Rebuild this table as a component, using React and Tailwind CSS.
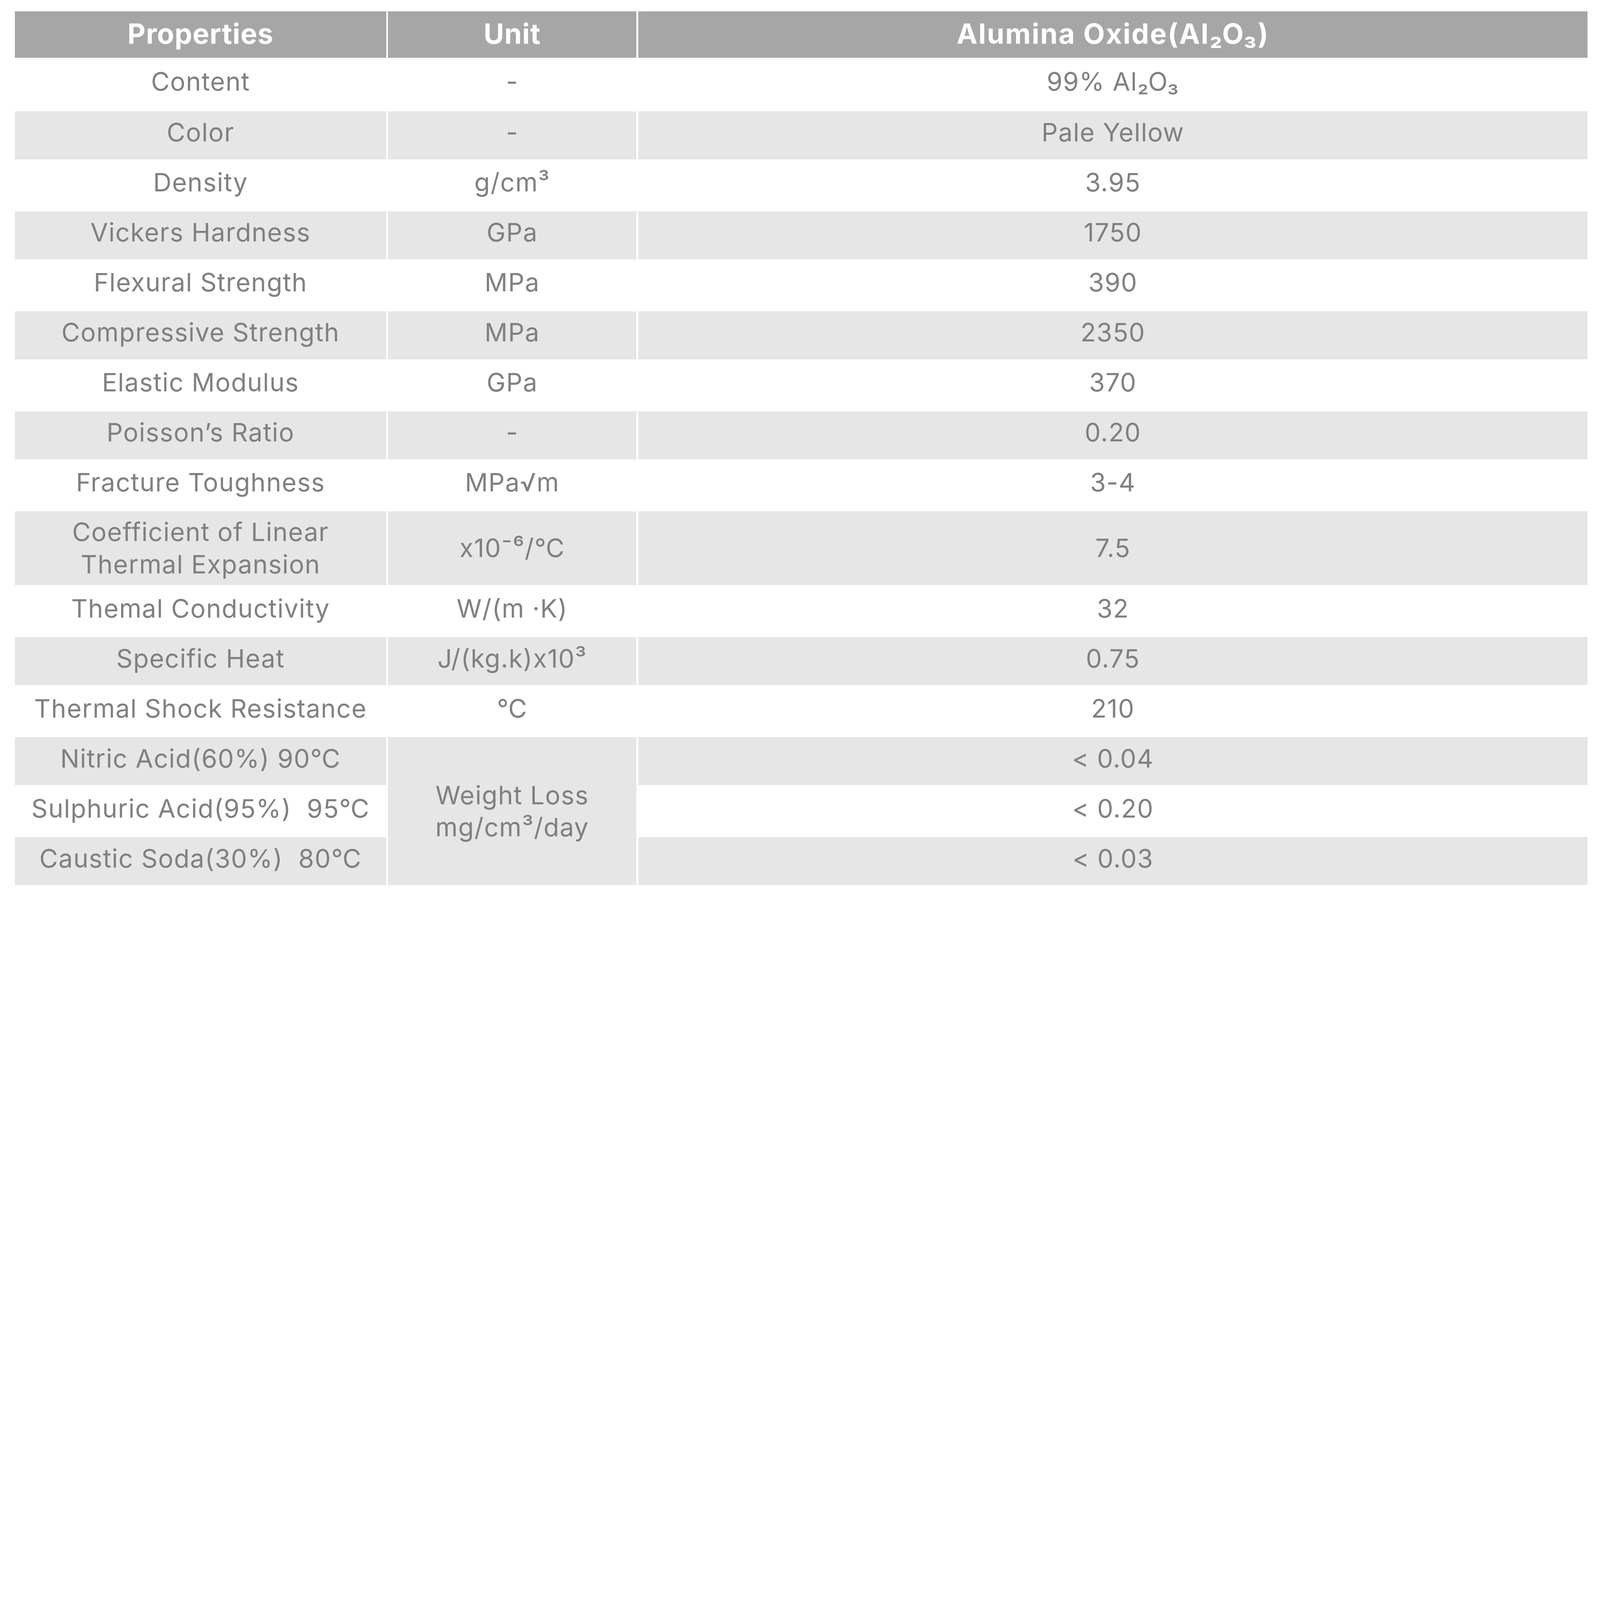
import React from "react";

const rows = [
  { p: "Content", u: "-", v: "99% Al₂O₃", g: false },
  { p: "Color", u: "-", v: "Pale Yellow", g: true },
  { p: "Density", u: "g/cm³", v: "3.95", g: false },
  { p: "Vickers Hardness", u: "GPa", v: "1750", g: true },
  { p: "Flexural Strength", u: "MPa", v: "390", g: false },
  { p: "Compressive Strength", u: "MPa", v: "2350", g: true },
  { p: "Elastic Modulus", u: "GPa", v: "370", g: false },
  { p: "Poisson’s Ratio", u: "-", v: "0.20", g: true },
  { p: "Fracture Toughness", u: "MPa√m", v: "3-4", g: false },
  { p: ["Coefficient of Linear", "Thermal Expansion"], u: "x10⁻⁶/℃", v: "7.5", g: true, tall: true },
  { p: "Themal Conductivity", u: "W/(m ·K)", v: "32", g: false },
  { p: "Specific Heat", u: "J/(kg.k)x10³", v: "0.75", g: true },
  { p: "Thermal Shock Resistance", u: "℃", v: "210", g: false },
  { p: "Nitric Acid(60%) 90℃", u: "span", v: "< 0.04", g: true },
  { p: "Sulphuric Acid(95%)  95℃", u: null, v: "< 0.20", g: false },
  { p: "Caustic Soda(30%)  80℃", u: null, v: "< 0.03", g: true },
];

function Cell({ gray, tall, children, className = "" }) {
  return (
    <div
      className={`flex flex-col items-center justify-center text-center whitespace-pre ${
        gray ? "bg-[#e6e6e6]" : "bg-white"
      } ${tall ? "" : "pb-[0.35vw]"} ${className}`}
    >
      {children}
    </div>
  );
}

function Head({ children, className = "" }) {
  return (
    <div
      className={`bg-[#a6a6a6] flex items-center justify-center pb-[0.12vw] text-white font-bold text-[1.745vw] ${className}`}
    >
      {children}
    </div>
  );
}

export default function App() {
  return (
    <div className="w-[100vw] h-[56.25vw] overflow-hidden bg-white pt-[0.703vw] pl-[0.9245vw] font-[Inter,'Noto_Sans_CJK_SC',sans-serif] text-[#808080] text-[1.589vw] leading-[2.005vw] tracking-[0.035vw]">
      <div className="grid grid-cols-[23.216vw_15.534vw_59.349vw] grid-rows-[2.917vw_3.099vw_repeat(8,3.008vw)_4.635vw_repeat(6,3.008vw)] gap-x-[0.104vw] gap-y-[0.117vw]">
        <Head className="tracking-[0.025vw]">Properties</Head>
        <Head className="tracking-[0.025vw]">Unit</Head>
        <Head className="tracking-[0.06vw]">Alumina Oxide(Al₂O₃)</Head>
        {rows.map((r, i) => (
          <React.Fragment key={i}>
            <Cell gray={r.g} tall={r.tall}>
              {Array.isArray(r.p) ? r.p.map((l) => <span key={l}>{l}</span>) : r.p}
            </Cell>
            {r.u === "span" ? (
              <Cell gray tall className="row-span-3">
                <span>Weight Loss</span>
                <span>mg/cm³/day</span>
              </Cell>
            ) : r.u === null ? null : (
              <Cell gray={r.g} tall={r.tall}>
                {r.u}
              </Cell>
            )}
            <Cell gray={r.g} tall={r.tall}>
              {r.v}
            </Cell>
          </React.Fragment>
        ))}
      </div>
    </div>
  );
}
